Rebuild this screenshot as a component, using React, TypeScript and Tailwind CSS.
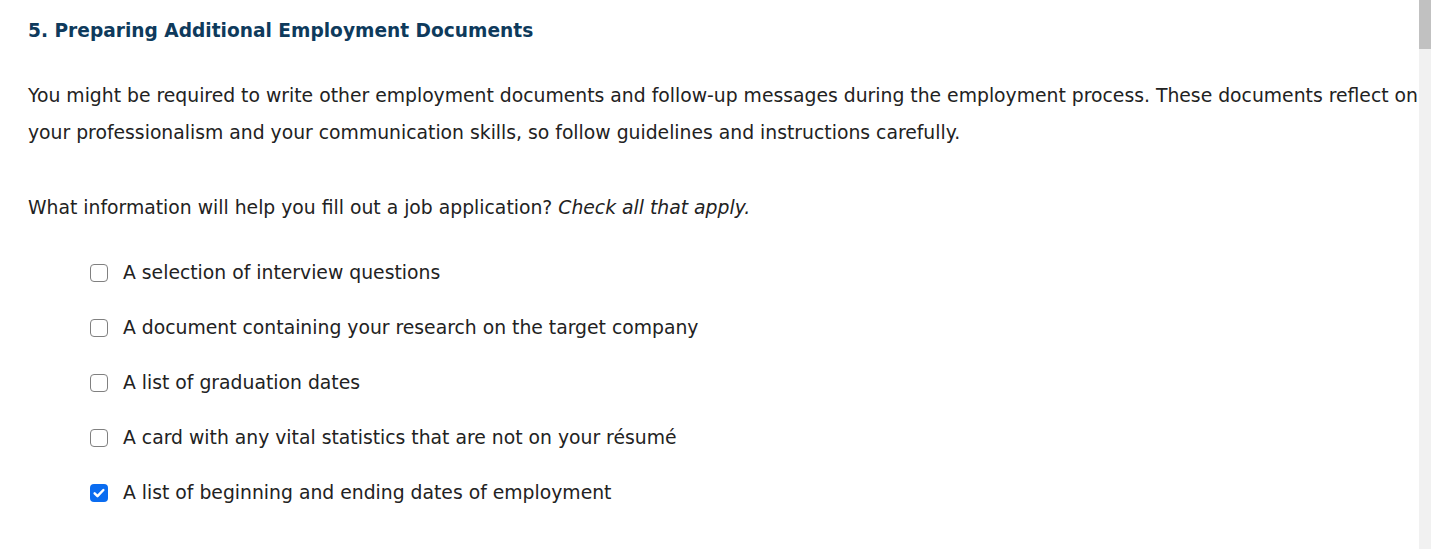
import React from 'react';

const options = [
  { label: 'A selection of interview questions', checked: false },
  { label: 'A document containing your research on the target company', checked: false },
  { label: 'A list of graduation dates', checked: false },
  { label: 'A card with any vital statistics that are not on your résumé', checked: false },
  { label: 'A list of beginning and ending dates of employment', checked: true },
];

const Box = ({ checked }: { checked: boolean }) =>
  checked ? (
    <span className="w-[18px] h-[18px] rounded-[4px] bg-[#0a6cf0] flex items-center justify-center shrink-0">
      <svg width="14" height="14" viewBox="0 0 16 16" fill="none" stroke="white" strokeWidth="2.8" strokeLinecap="round" strokeLinejoin="round">
        <path d="M3 8.3l3.3 3.3L13 4.6" />
      </svg>
    </span>
  ) : (
    <span className="w-[18px] h-[18px] rounded-[4px] border-[1.5px] border-[#808080] bg-white shrink-0" />
  );

export default function App() {
  return (
    <div className="flex h-[549px] w-[1431px] bg-white overflow-hidden" style={{ fontFamily: '"DejaVu Sans", Verdana, sans-serif' }}>
      <div className="flex-1 pl-[28px] text-[#222222]">
        <h2 className="mt-[20px] text-[18.6px] leading-[22px] font-bold text-[#0e3a5c]">
          5. Preparing Additional Employment Documents
        </h2>
        <p className="mt-[35px] text-[18.8px] leading-[37px]">
          You might be required to write other employment documents and follow-up messages during the employment process. These documents reflect on your professionalism and your communication skills, so follow guidelines and instructions carefully.
        </p>
        <p className="mt-[38px] text-[18.8px] leading-[37px]">
          What information will help you fill out a job application? <em>Check all that apply.</em>
        </p>
        <ul className="mt-[36px] ml-[62px] flex flex-col gap-[33px]">
          {options.map((o) => (
            <li key={o.label} className="flex items-center gap-[15px] text-[18.8px] leading-[22px]">
              <Box checked={o.checked} />
              <span>{o.label}</span>
            </li>
          ))}
        </ul>
      </div>
      <div className="w-[12px] bg-[#f1f1f1] flex flex-col">
        <div className="h-[49px] bg-[#c1c1c1]" />
      </div>
    </div>
  );
}
